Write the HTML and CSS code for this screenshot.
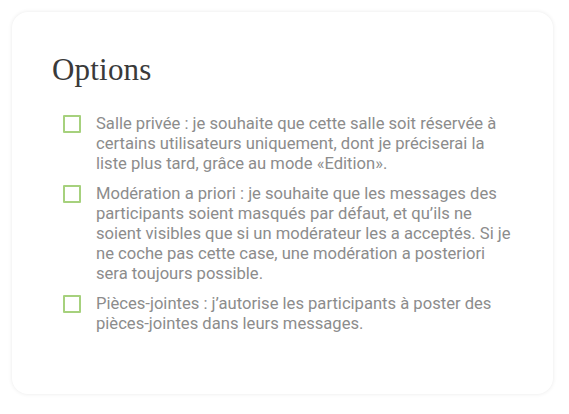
FILE: index.html
```html
<!DOCTYPE html>
<html lang="fr">
<head>
<meta charset="utf-8">
<title>Options</title>
<link rel="stylesheet" href="styles.css">
</head>
<body>
<section class="card">
  <h2 class="card-title">Options</h2>
  <ul class="options">
    <li class="option">
      <span class="checkbox"></span>
      <span class="option-text">Salle privée : je souhaite que cette salle soit réservée à<br>certains utilisateurs uniquement, dont je préciserai la<br>liste plus tard, grâce au mode «Edition».</span>
    </li>
    <li class="option">
      <span class="checkbox"></span>
      <span class="option-text">Modération a priori : je souhaite que les messages des<br>participants soient masqués par défaut, et qu’ils ne<br>soient visibles que si un modérateur les a acceptés. Si je<br>ne coche pas cette case, une modération a posteriori<br>sera toujours possible.</span>
    </li>
    <li class="option">
      <span class="checkbox"></span>
      <span class="option-text">Pièces-jointes : j’autorise les participants à poster des<br>pièces-jointes dans leurs messages.</span>
    </li>
  </ul>
</section>
</body>
</html>
```

FILE: styles.css
```css
html, body {
  margin: 0;
  padding: 0;
  background: #ffffff;
}

body {
  padding: 12px 16px 20px 12px;
  font-family: Roboto, "Liberation Sans", sans-serif;
}

.card {
  background: #ffffff;
  border-radius: 16px;
  box-shadow: 0 0 4px rgba(0, 0, 0, 0.09);
  padding: 40px 22px 62px 40px;
  box-sizing: border-box;
  height: 382px;
}

.card-title {
  margin: 0 0 26px 0;
  font-family: "Liberation Serif", serif;
  font-weight: normal;
  font-size: 31px;
  line-height: 36px;
  color: #3a3a3a;
  letter-spacing: 0.2px;
}

.options {
  list-style: none;
  margin: 0;
  padding: 0 0 0 11px;
  display: flex;
  flex-direction: column;
  gap: 10px;
}

.option {
  display: flex;
  align-items: flex-start;
  gap: 15px;
}

.checkbox {
  flex: none;
  width: 18px;
  height: 18px;
  box-sizing: border-box;
  border: 2px solid #a6d17d;
  border-radius: 1px;
  margin-top: 1px;
}

.option-text {
  flex: 1;
  font-size: 16.6px;
  line-height: 20px;
  color: #8c8c8c;
}
```
